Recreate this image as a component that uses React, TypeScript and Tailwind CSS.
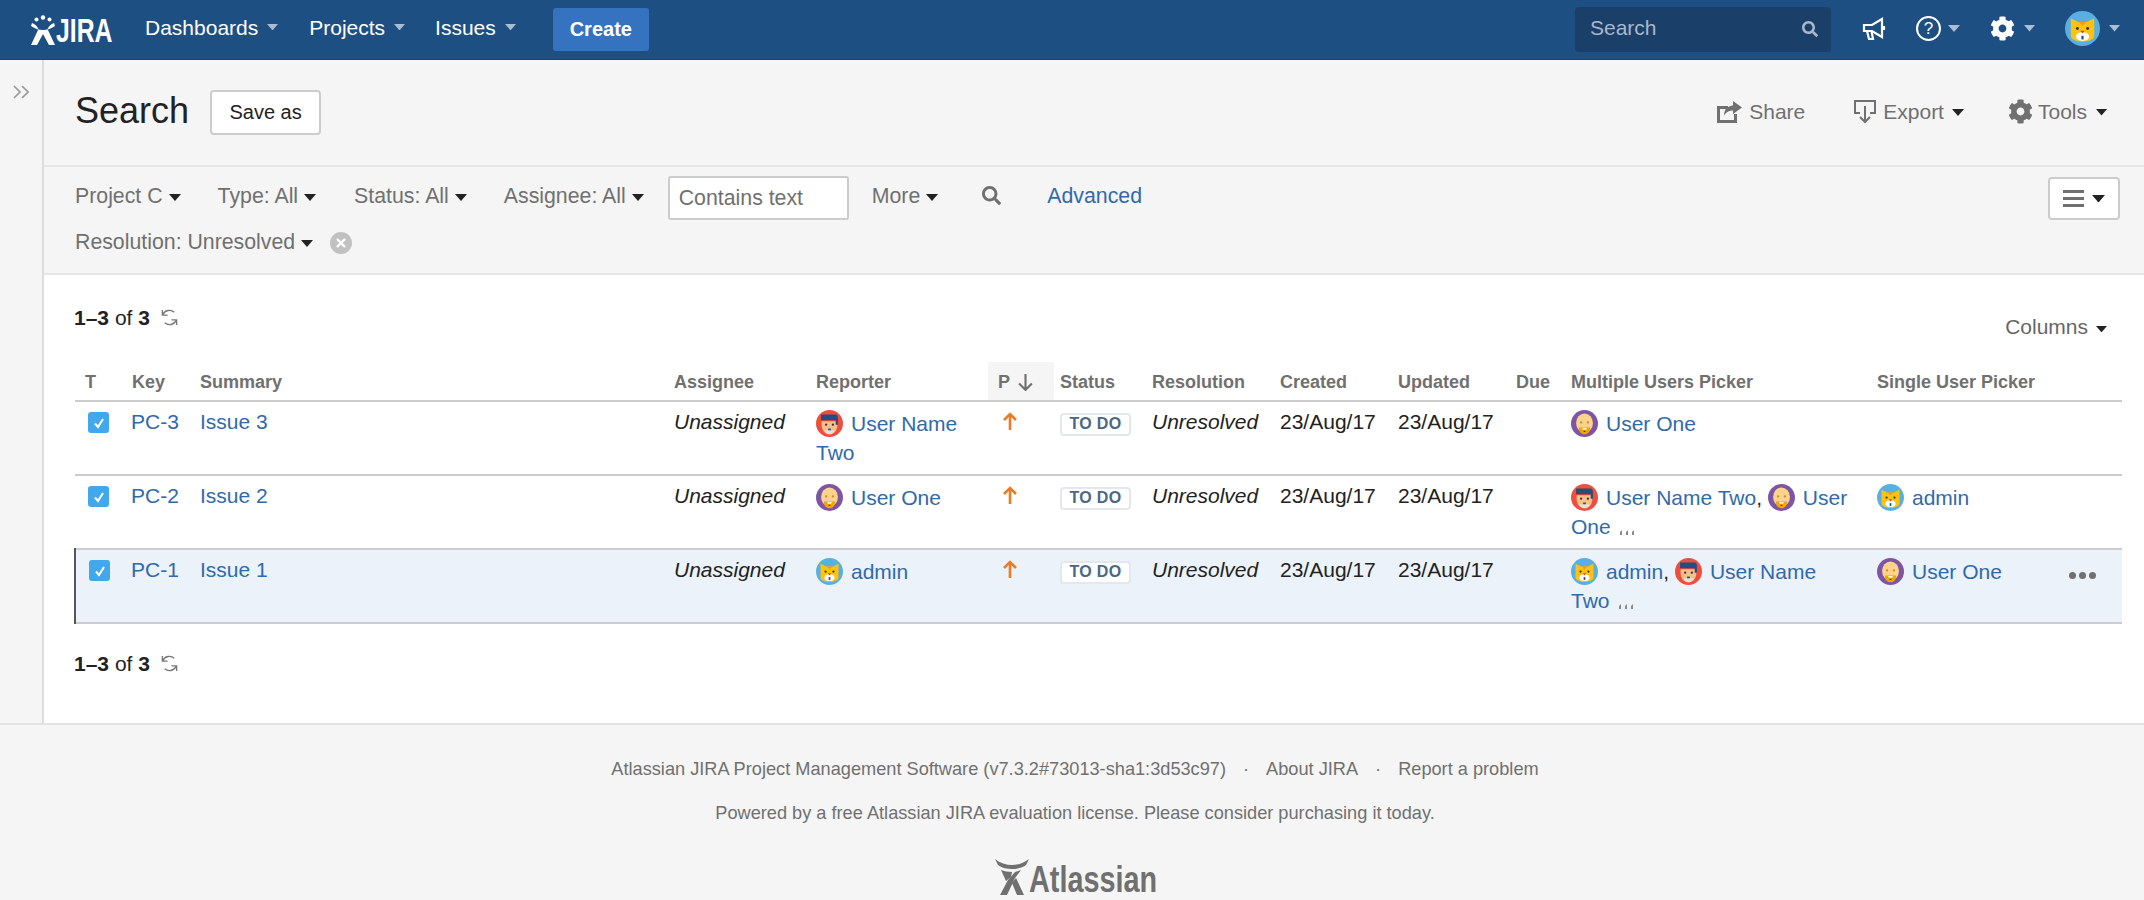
import { FaCog, FaSearch } from "react-icons/fa";

type Who = "cat" | "man" | "bald";

function Avatar({ who, size = 27 }: { who: Who; size?: number }) {
  return (
    <svg viewBox="0 0 48 48" width={size} height={size} className="inline-block shrink-0 align-[-6px]">
      {who === "cat" && (
        <g>
          <circle cx="24" cy="24" r="24" fill="#59afe1" />
          <path d="M8 10l10 5h12l10-5v24c0 5-7 8-16 8S8 39 8 34z" fill="#ffc20e" />
          <path d="M19 15h10l-5 5z" fill="#f79232" />
          <circle cx="17" cy="24" r="2" fill="#333" />
          <circle cx="31" cy="24" r="2" fill="#333" />
          <path d="M15 35c0-4 4-6 9-6s9 2 9 6-4 6-9 6-9-2-9-6z" fill="#fff" />
          <path d="M21 27h6l-3 4z" fill="#d04437" />
          <rect x="22.500" y="34" width="3" height="5" fill="#205081" />
        </g>
      )}
      {who === "man" && (
        <g>
          <circle cx="24" cy="24" r="24" fill="#f04d3f" />
          <path d="M10 20h28v6c0 10-6 17-14 17S10 36 10 26z" fill="#f7c08a" />
          <path d="M9 8h26c3 0 4 3 4 8v10h-4v-8H9z" fill="#205081" />
          <circle cx="18" cy="26" r="2" fill="#333" />
          <circle cx="30" cy="26" r="2" fill="#333" />
          <path d="M15 36h18c-1 5-5 7-9 7s-8-2-9-7z" fill="#e6e3d6" />
          <rect x="21.500" y="33" width="5" height="3" fill="#205081" />
        </g>
      )}
      {who === "bald" && (
        <g>
          <circle cx="24" cy="24" r="24" fill="#7d55a5" />
          <ellipse cx="24" cy="23" rx="15" ry="17" fill="#fbd38a" />
          <circle cx="18" cy="22" r="2" fill="#c98a20" />
          <circle cx="30" cy="22" r="2" fill="#c98a20" />
          <path d="M14 31h20c0 8-4 12-10 12s-10-4-10-12z" fill="#f5a500" />
          <rect x="20.500" y="32" width="7" height="3" fill="#fff" />
          <rect x="22.500" y="37" width="3" height="2" fill="#333" />
        </g>
      )}
    </svg>
  );
}

function User({ who, name, lead, rest, comma = false }: { who: Who; name?: string; lead?: string; rest?: string; comma?: boolean }) {
  return (
    <span>
      <Avatar who={who} />
      <a className="ml-[8px] text-[#3069ad]">
        {name ?? lead}
        {comma && <span className="text-[#222222]">,</span>}
      </a>
      {rest && " "}
      {rest && <a className="text-[#3069ad]">{rest}</a>}
    </span>
  );
}

function Caret({ light = false, w = 12 }: { light?: boolean; w?: number }) {
  return (
    <svg viewBox="0 0 12 7" width={w} height={(w * 7) / 12} className="shrink-0">
      <path d="M0 0h12L6 7z" fill={light ? "#a9bdd4" : "#222222"} />
    </svg>
  );
}

function More() {
  return (
    <svg viewBox="0 0 16 7" width="16" height="7" className="ml-[8px] inline-block align-[-2px]">
      <g fill="#8a8a8a">
        <path d="M1 3l2-2v5H1z" />
        <path d="M7 3l2-2v5H7z" />
        <path d="M13 3l2-2v5h-2z" />
      </g>
    </svg>
  );
}

function Refresh() {
  return (
    <svg viewBox="0 0 20 20" width="19" height="19" fill="none" stroke="#777" strokeWidth="1.4">
      <path d="M15 4.500A7.500 7.500 0 0 0 3 7" />
      <path d="M2.500 2v5.500H8" />
      <path d="M5 15.500A7.500 7.500 0 0 0 17 13" />
      <path d="M17.500 18v-5.500H12" />
    </svg>
  );
}

function UpArrow() {
  return (
    <svg viewBox="0 0 14 18" width="14" height="18" fill="none" stroke="#ea7d24" strokeWidth="2.6" className="ml-[9px] mt-[5px]">
      <path d="M7 18V2" />
      <path d="M1 8l6-6 6 6" />
    </svg>
  );
}

function Lozenge() {
  return (
    <span className="mt-[3px] inline-flex h-[23px] w-[71px] items-center justify-center rounded-[4px] border-2 border-[#e4e8ed] bg-white text-[16px] font-bold leading-none tracking-[0.3px] text-[#4a6785]">
      TO DO
    </span>
  );
}

function Check() {
  return (
    <span className="ml-[7px] mt-[5px] flex h-[21px] w-[21px] items-center justify-center rounded-[3px] bg-[#42a8ee]">
      <svg viewBox="0 0 12 12" width="12" height="12" fill="none" stroke="#fff" strokeWidth="2">
        <path d="M2 6.500l3 3.500 5-8" />
      </svg>
    </span>
  );
}

const th = "pl-[6px] pb-[6px] text-left align-bottom text-[18px] font-bold leading-[24px] text-[#707070] border-b-2 border-[#cccccc]";
const td = "pl-[6px] pt-[5px] align-top";
const userTd = "pl-[6px] pt-[7px] align-top";

function Row({
  k,
  s,
  rep,
  multi,
  single,
  selected = false,
}: {
  k: string;
  s: string;
  rep: React.ReactNode;
  multi: React.ReactNode;
  single?: React.ReactNode;
  selected?: boolean;
}) {
  return (
    <tr className={`h-[74px] border-b-2 border-[#cccccc] ${selected ? "bg-[#ebf2f9]" : ""}`}>
      <td className={`${td} ${selected ? "border-l-2 border-[#555555]" : ""}`}>
        <Check />
      </td>
      <td className="pl-[5px] pt-[5px] align-top">
        <a className="text-[#3069ad]">{k}</a>
      </td>
      <td className={td}>
        <a className="text-[#3069ad]">{s}</a>
      </td>
      <td className={`${td} italic text-[#222222]`}>Unassigned</td>
      <td className={userTd}>{rep}</td>
      <td className={td}>
        <UpArrow />
      </td>
      <td className={td}>
        <Lozenge />
      </td>
      <td className={`${td} italic text-[#222222]`}>Unresolved</td>
      <td className={`${td} text-[#222222]`}>23/Aug/17</td>
      <td className={`${td} text-[#222222]`}>23/Aug/17</td>
      <td className={td}></td>
      <td className={`${userTd} pr-[12px]`}>{multi}</td>
      <td className={`${userTd} relative`}>
        {single}
        {selected && (
          <span className="absolute right-[26px] top-[22px] flex gap-[3px]">
            <i className="h-[7px] w-[7px] rounded-full bg-[#707070]" />
            <i className="h-[7px] w-[7px] rounded-full bg-[#707070]" />
            <i className="h-[7px] w-[7px] rounded-full bg-[#707070]" />
          </span>
        )}
      </td>
    </tr>
  );
}

function Count() {
  return (
    <div className="flex items-center text-[#222222]">
      <span>
        <b>1–3</b> of <b>3</b>
      </span>
      <span className="ml-[10px]">
        <Refresh />
      </span>
    </div>
  );
}

function NavItem({ label, className }: { label: string; className: string }) {
  return (
    <div className={`mb-[5px] flex items-center ${className}`}>
      <span className="text-white">{label}</span>
      <span className="ml-[9px]">
        <Caret light w={11} />
      </span>
    </div>
  );
}

function FilterItem({ label, className = "" }: { label: string; className?: string }) {
  return (
    <div className={`mb-[3px] flex items-center text-[21.3px] text-[#707070] ${className}`}>
      <span>{label}</span>
      <span className="ml-[6px] mt-[2px]">
        <Caret w={12} />
      </span>
    </div>
  );
}

export default function App() {
  return (
    <div className="flex h-[900px] flex-col overflow-hidden bg-white font-['Liberation_Sans',Arial,sans-serif] text-[21px] leading-[29px]">
      <header className="flex h-[60px] shrink-0 items-center border-b border-[#2d3f58] bg-[#1e4f82]">
        <div className="ml-[31px] flex items-end">
          <svg viewBox="0 0 24 30" width="24" height="30" fill="#fff">
            <circle cx="12" cy="2.500" r="2.200" />
            <circle cx="5.500" cy="4.500" r="2" />
            <circle cx="18.500" cy="4.500" r="2" />
            <path d="M1 8c3 1 5 3 6.500 6L0 30h6l6-11 6 11h6l-7.500-16C18 11 20 9 23 8l1 3c-5 3-8 4-12 4S5 14 0 11z" />
          </svg>
          <span className="ml-[1px] inline-block w-[56px] origin-left scale-x-[0.75] whitespace-nowrap text-[33px] font-bold leading-[29px] text-white">JIRA</span>
        </div>
        <NavItem label="Dashboards" className="ml-[33px]" />
        <NavItem label="Projects" className="ml-[31px]" />
        <NavItem label="Issues" className="ml-[30px]" />
        <button className="ml-[37px] h-[43px] w-[96px] rounded-[3px] bg-[#3572c0] text-[20px] font-bold text-white">Create</button>
        <div className="ml-auto flex h-[45px] w-[256px] items-center justify-between rounded-[4px] bg-[#1a3f68] pl-[15px] pr-[13px]">
          <span className="mb-[5px] text-[#a8b8cc]">Search</span>
          <FaSearch className="mb-[2px] text-[16px] text-[#a8b8cc]" />
        </div>
        <svg viewBox="0 0 24 24" width="24" height="26" fill="none" stroke="#fff" strokeWidth="2.200" className="mb-[2px] ml-[31px]">
          <path d="M2 8h8l10-6v18L10 14H2z" />
          <path d="M5 14l2 8h4l-1.500-8" />
          <path d="M22 9v4" />
        </svg>
        <span className="mb-[2px] ml-[30px] flex h-[25px] w-[25px] items-center justify-center rounded-full border-2 border-white text-[17px] leading-none text-white">?</span>
        <span className="mb-[2px] ml-[7px]">
          <Caret light w={12} />
        </span>
        <FaCog className="mb-[2px] ml-[30px] text-[25px] text-white" />
        <span className="mb-[2px] ml-[9px]">
          <Caret light w={11} />
        </span>
        <span className="mb-[3px] ml-[30px] flex">
          <Avatar who="cat" size={35} />
        </span>
        <span className="mb-[2px] ml-[9px] mr-[24px]">
          <Caret light w={11} />
        </span>
      </header>

      <div className="flex h-[663px] shrink-0">
        <aside className="w-[44px] shrink-0 border-r-2 border-[#dddddd] bg-[#f5f5f5] pl-[13px] pt-[25px]">
          <svg viewBox="0 0 16 14" width="16" height="14" fill="none" stroke="#999" strokeWidth="1.600">
            <path d="M1 1l6 6-6 6" />
            <path d="M9 1l6 6-6 6" />
          </svg>
        </aside>
        <main className="flex min-w-0 flex-1 flex-col">
          <section className="flex h-[107px] shrink-0 items-center border-b-2 border-[#e6e6e6] bg-[#f5f5f5] pb-[2px] pl-[31px] pr-[37px] text-[#707070]">
            <h1 className="mb-[1px] text-[36px] leading-[44px] text-[#222222]">Search</h1>
            <button className="ml-[21px] mt-[2px] h-[45px] w-[111px] rounded-[4px] border-2 border-[#cccccc] bg-white text-[20px] text-[#222222]">Save as</button>
            <svg viewBox="0 0 25 22" width="25" height="22" className="ml-auto" fill="#707070">
              <path d="M0 5h11v3H3v11h14v-6h3v9H0z" />
              <path d="M16 0l9 6.500-9 6.500V9.500c-4 0-7 1.500-9 5 0-6 3.500-9.500 9-10z" />
            </svg>
            <span className="ml-[7px]">Share</span>
            <svg viewBox="0 0 22 24" width="22" height="24" fill="none" stroke="#707070" strokeWidth="2" className="ml-[49px]">
              <path d="M6 13H1V1h20v12h-5" />
              <path d="M11 6v16M6 17l5 5 5-5" />
            </svg>
            <span className="ml-[7px]">Export</span>
            <span className="ml-[8px] mt-[2px]">
              <Caret w={12} />
            </span>
            <FaCog className="ml-[44px] text-[25px]" />
            <span className="ml-[5px]">Tools</span>
            <span className="ml-[9px] mt-[2px]">
              <Caret w={11} />
            </span>
          </section>

          <section className="relative h-[108px] shrink-0 border-b-2 border-[#e6e6e6] bg-[#f5f5f5] pl-[31px] pt-[9px]">
            <div className="flex h-[44px] items-center">
              <FilterItem label="Project C" />
              <FilterItem label="Type: All" className="ml-[37px]" />
              <FilterItem label="Status: All" className="ml-[38px]" />
              <FilterItem label="Assignee: All" className="ml-[37px]" />
              <input
                readOnly
                placeholder="Contains text"
                className="ml-[24px] h-[44px] w-[181px] rounded-[3px] border-2 border-[#cccccc] bg-white pl-[9px] text-[21.3px] text-[#707070] placeholder:text-[#707070]"
              />
              <FilterItem label="More" className="ml-[23px]" />
              <FaSearch className="mb-[6px] ml-[44px] text-[19px] text-[#707070]" />
              <a className="mb-[3px] ml-[46px] text-[21.3px] text-[#3069ad]">Advanced</a>
            </div>
            <div className="mt-[2px] flex h-[44px] items-center">
              <FilterItem label="Resolution: Unresolved" />
              <svg viewBox="0 0 22 22" width="22" height="22" className="mb-[3px] ml-[17px]">
                <circle cx="11" cy="11" r="11" fill="#c1c1c1" />
                <path d="M7 7l8 8M15 7l-8 8" stroke="#fff" strokeWidth="2.400" />
              </svg>
            </div>
            <button className="absolute right-[24px] top-[10px] flex h-[43px] w-[72px] items-center justify-center gap-[8px] rounded-[4px] border-2 border-[#cccccc] bg-white">
              <svg viewBox="0 0 21 17" width="21" height="17" fill="#707070">
                <rect width="21" height="3" />
                <rect y="7" width="21" height="3" />
                <rect y="14" width="21" height="3" />
              </svg>
              <Caret w={13} />
            </button>
          </section>

          <section className="flex-1 bg-white pl-[30px] pr-[23px] pt-[28px]">
            <div className="flex h-[29px] items-start justify-between">
              <Count />
              <div className="mr-[14px] mt-[9px] flex items-center text-[#666666]">
                <span>Columns</span>
                <span className="ml-[8px] mt-[5px]">
                  <Caret w={11} />
                </span>
              </div>
            </div>
            <table className="mt-[30px] w-[2047px] table-fixed border-collapse">
              <colgroup>
                <col className="w-[51px]" />
                <col className="w-[68px]" />
                <col className="w-[474px]" />
                <col className="w-[142px]" />
                <col className="w-[178px]" />
                <col className="w-[66px]" />
                <col className="w-[92px]" />
                <col className="w-[128px]" />
                <col className="w-[118px]" />
                <col className="w-[118px]" />
                <col className="w-[55px]" />
                <col className="w-[306px]" />
                <col className="w-[251px]" />
              </colgroup>
              <thead>
                <tr className="h-[39px]">
                  <th className={`${th} pl-[10px]`}>T</th>
                  <th className={`${th} pl-[5px]`}>Key</th>
                  <th className={th}>Summary</th>
                  <th className={th}>Assignee</th>
                  <th className={th}>Reporter</th>
                  <th className={`${th} bg-[#f5f5f5] pl-[10px]`}>
                    <span className="flex items-center gap-[8px]">
                      P
                      <svg viewBox="0 0 14 16" width="15" height="17" fill="none" stroke="#707070" strokeWidth="2">
                        <path d="M7 0v15M1 9l6 6 6-6" />
                      </svg>
                    </span>
                  </th>
                  <th className={th}>Status</th>
                  <th className={th}>Resolution</th>
                  <th className={th}>Created</th>
                  <th className={th}>Updated</th>
                  <th className={th}>Due</th>
                  <th className={th}>Multiple Users Picker</th>
                  <th className={th}>Single User Picker</th>
                </tr>
              </thead>
              <tbody>
                <Row k="PC-3" s="Issue 3" rep={<User who="man" lead="User Name" rest="Two" />} multi={<User who="bald" name="User One" />} />
                <Row
                  k="PC-2"
                  s="Issue 2"
                  rep={<User who="bald" name="User One" />}
                  multi={
                    <>
                      <User who="man" name="User Name Two" comma />{" "}
                      <User who="bald" lead="User" rest="One" />
                      <More />
                    </>
                  }
                  single={<User who="cat" name="admin" />}
                />
                <Row
                  k="PC-1"
                  s="Issue 1"
                  selected
                  rep={<User who="cat" name="admin" />}
                  multi={
                    <>
                      <User who="cat" name="admin" comma />{" "}
                      <User who="man" lead="User Name" rest="Two" />
                      <More />
                    </>
                  }
                  single={<User who="bald" name="User One" />}
                />
              </tbody>
            </table>
            <div className="mt-[25px]">
              <Count />
            </div>
          </section>
        </main>
      </div>

      <footer className="flex-1 border-t-2 border-[#e2e2e2] bg-[#f5f5f5] pl-[6px] pt-[31px] text-center text-[18.2px] leading-[26px] text-[#707070]">
        <p>
          Atlassian JIRA Project Management Software (v7.3.2#73013-sha1:3d53c97)
          <span className="mx-[17px]">·</span>About JIRA<span className="mx-[17px]">·</span>Report a problem
        </p>
        <p className="mt-[18px]">Powered by a free Atlassian JIRA evaluation license. Please consider purchasing it today.</p>
        <div className="mt-[33px] flex items-end justify-center">
          <svg viewBox="0 0 34 36" width="34" height="36" fill="#707070">
            <path d="M0 0c5 4 11 6 17 6s12-2 17-6l-3 6c-4 3-9 4-14 4S7 9 3 6z" />
            <path d="M6 11c3 1 7 2 11 2l-1 5-5 4z" />
            <path d="M26 11l-6 8-8 17H5l8-15 7-8z" />
            <path d="M17 24l5 12h7l-8-17z" />
          </svg>
          <span className="inline-block w-[126px] origin-left scale-x-[0.8] whitespace-nowrap text-left text-[36px] font-bold leading-[30px]">Atlassian</span>
        </div>
      </footer>
    </div>
  );
}
